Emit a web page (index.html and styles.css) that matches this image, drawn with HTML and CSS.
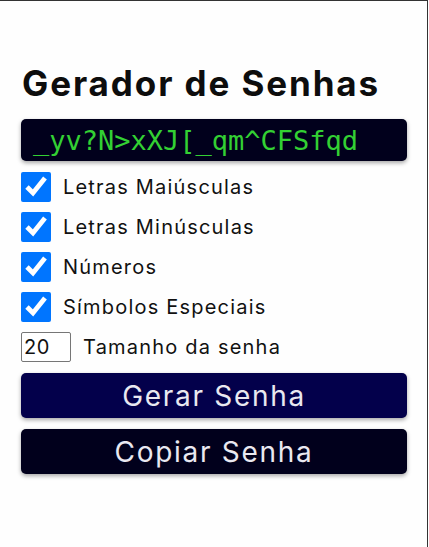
FILE: index.html
```html
<!DOCTYPE html>
<html lang="pt-BR">
<head>
<meta charset="utf-8">
<title>Gerador de Senhas</title>
<link rel="stylesheet" href="styles.css">
</head>
<body>
<main class="frame">
  <section class="app">
    <h1 class="title">Gerador de Senhas</h1>
    <div class="password">_yv?N&gt;xXJ[_qm^CFSfqd</div>
    <div class="options">
      <label class="option"><input type="checkbox" class="check" checked><span>Letras Maiúsculas</span></label>
      <label class="option"><input type="checkbox" class="check" checked><span>Letras Minúsculas</span></label>
      <label class="option"><input type="checkbox" class="check" checked><span>Números</span></label>
      <label class="option"><input type="checkbox" class="check" checked><span>Símbolos Especiais</span></label>
      <label class="option length"><input type="number" class="num" value="20"><span>Tamanho da senha</span></label>
    </div>
    <button class="btn btn-generate">Gerar Senha</button>
    <button class="btn btn-copy">Copiar Senha</button>
  </section>
</main>
</body>
</html>
```

FILE: styles.css
```css
html, body {
  margin: 0;
  padding: 0;
  overflow: hidden;
  background: #ffffff;
}

.frame {
  box-sizing: border-box;
  width: 428px;
  height: 547px;
  border-top: 1px solid #333333;
  border-right: 1px solid #333333;
  background: #fefefe;
}

.app {
  display: flex;
  flex-direction: column;
  padding: 62px 0 0 21px;
  width: 386px;
  font-family: "Inter", "Open Sans", sans-serif;
  color: #111111;
}

.title {
  margin: 0 0 16px 1px;
  font-size: 35px;
  line-height: 40px;
  font-weight: 700;
  letter-spacing: 1.9px;
  color: #0d0d0d;
}

.password {
  box-sizing: border-box;
  height: 42px;
  padding: 0 0 0 12px;
  display: flex;
  align-items: center;
  background: #01001c;
  border-radius: 5px;
  box-shadow: 0 2px 4px rgba(0, 0, 0, 0.35);
  font-family: "DejaVu Sans Mono", monospace;
  font-size: 27px;
  color: #33d033;
  white-space: nowrap;
}

.options {
  display: flex;
  flex-direction: column;
  gap: 10px;
  margin-top: 11px;
}

.option {
  display: flex;
  align-items: center;
  gap: 12px;
  height: 30px;
  font-size: 20px;
  letter-spacing: 1.2px;
  color: #111111;
}

.check {
  margin: 0;
  width: 30px;
  height: 30px;
  accent-color: #0075ff;
}

.num {
  box-sizing: border-box;
  margin: 0;
  width: 50px;
  height: 30px;
  padding: 0 2px;
  border: 1px solid #767676;
  border-radius: 2px;
  font-family: "Inter", sans-serif;
  font-size: 20px;
  letter-spacing: 0.5px;
  color: #111111;
}

.btn {
  box-sizing: border-box;
  height: 45px;
  margin-top: 11px;
  border: none;
  border-radius: 5px;
  box-shadow: 0 2px 4px rgba(0, 0, 0, 0.35);
  font-family: "Inter", sans-serif;
  font-size: 28px;
  letter-spacing: 1.7px;
  color: #e9e8f0;
  padding: 0;
}

.btn-generate {
  background: #03004b;
}

.btn-copy {
  background: #01001c;
}
```
